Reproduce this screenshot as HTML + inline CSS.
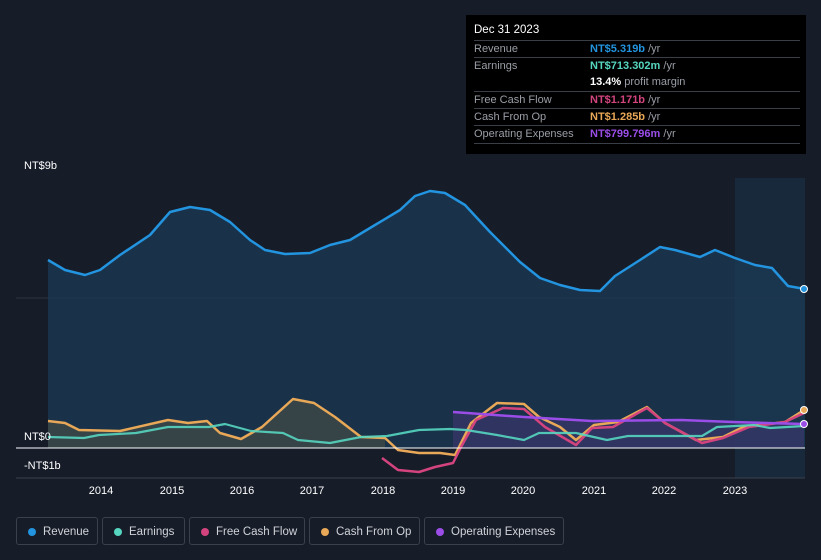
<!DOCTYPE html>
<html><head><style>
body{margin:0;width:821px;height:560px;background:#161c28;font-family:"Liberation Sans",sans-serif;overflow:hidden;position:relative}
.tt{position:absolute;left:466px;top:15px;width:340px;height:139px;background:#000;font-size:11px;color:#9a9ea6}
.tt .h{position:absolute;left:8px;top:9px;color:#fff;font-size:11.5px}
.r{position:absolute;left:8px;right:6px;height:17px;border-top:1px solid #3a3e46;line-height:17px}
.r span{position:absolute;left:116px}
.lab{position:absolute;color:#fff;font-size:11px}
.yr{position:absolute;top:485px;color:#fff;font-size:11px;width:40px;text-align:center;margin-left:-20px}
.lg{position:absolute;top:517px;height:28px;border:1px solid #3a404c;border-radius:3px;color:#d0d3d8;font-size:11.5px;line-height:28px;box-sizing:border-box;padding-left:26px}
.lg i{position:absolute;left:11px;top:10px;width:8px;height:8px;border-radius:50%}
</style></head><body>
<svg width="821" height="560" style="position:absolute;left:0;top:0">
<rect x="735" y="178" width="70" height="300" fill="#1a3247" opacity="0.6"/>
<line x1="16" y1="298" x2="805" y2="298" stroke="#2e3440" stroke-width="1"/>
<line x1="16" y1="478" x2="805" y2="478" stroke="#3a404c" stroke-width="1"/>
<path d="M48,260 L65,270 85,275 100,270 120,255 150,235 170,212 190,207 210,210 230,222 250,240 265,250 285,254 310,253 330,245 350,240 370,228 400,210 415,196 430,191 445,193 465,205 490,232 520,262 540,278 560,285 580,290 600,291 615,276 640,260 660,247 675,250 700,257 715,250 735,258 755,265 772,268 788,286 805,289 L805,448 L48,448Z" fill="#1b3a55" opacity="0.75"/>
<path d="M48,260 L65,270 85,275 100,270 120,255 150,235 170,212 190,207 210,210 230,222 250,240 265,250 285,254 310,253 330,245 350,240 370,228 400,210 415,196 430,191 445,193 465,205 490,232 520,262 540,278 560,285 580,290 600,291 615,276 640,260 660,247 675,250 700,257 715,250 735,258 755,265 772,268 788,286 805,289" fill="none" stroke="#2394df" stroke-width="2.5" stroke-linejoin="round"/>
<path d="M453,412 L524,417 592,421 681,420 733,422 804,424 L804,448 L453,448Z" fill="#5a3a8a" opacity="0.35"/>
<path d="M48,421 L65,423 79,430 120,431 168,420 188,423 207,421 220,433 241,439 262,427 293,399 314,403 335,417 361,437 385,438 L385,448 L48,448Z" fill="#5a5a48" opacity="0.45"/>
<path d="M48,421 L65,423 79,430 120,431 168,420 188,423 207,421 220,433 241,439 262,427 293,399 314,403 335,417 361,437 385,438 398,450 419,453 440,453 455,455 471,423 497,403 524,404 539,417 560,427 576,440 594,425 618,422 647,407 665,423 696,440 723,437 743,427 785,422 804,410" fill="none" stroke="#e8a857" stroke-width="2.5" stroke-linejoin="round"/>
<path d="M382,458 L398,470 419,472 435,467 453,463 461,447 476,420 503,408 524,409 545,427 576,445 592,428 613,427 647,408 665,423 702,443 723,438 749,427 785,422 804,413" fill="none" stroke="#d3447e" stroke-width="2.5" stroke-linejoin="round"/>
<path d="M48,437 L84,438 99,435 136,433 168,427 209,427 225,424 251,431 283,433 298,440 330,443 361,437 387,436 419,430 450,429 466,430 497,435 524,440 539,433 576,433 607,440 628,436 670,436 702,436 717,427 754,425 770,428 804,426" fill="none" stroke="#56d6c0" stroke-width="2.2" stroke-linejoin="round" opacity="0.9"/>
<path d="M453,412 L524,417 592,421 681,420 733,422 804,424" fill="none" stroke="#9b4de8" stroke-width="2.5"/>
<line x1="16" y1="448" x2="805" y2="448" stroke="#fff" stroke-width="1"/>
<circle cx="804" cy="289" r="3.5" fill="#2394df" stroke="#fff"/>
<circle cx="804" cy="410" r="3.5" fill="#e8a857" stroke="#fff"/>
<circle cx="804" cy="424" r="3.5" fill="#9b4de8" stroke="#fff"/>
</svg>
<div class="lab" style="left:24px;top:160px">NT$9b</div>
<div class="lab" style="left:24px;top:431px">NT$0</div>
<div class="lab" style="left:24px;top:460px">-NT$1b</div>
<div class="yr" style="left:101px">2014</div><div class="yr" style="left:172px">2015</div><div class="yr" style="left:242px">2016</div><div class="yr" style="left:312px">2017</div><div class="yr" style="left:383px">2018</div><div class="yr" style="left:453px">2019</div><div class="yr" style="left:523px">2020</div><div class="yr" style="left:594px">2021</div><div class="yr" style="left:664px">2022</div><div class="yr" style="left:735px">2023</div>
<div class="tt">
<div class="h">Dec 31 2023</div>
<div class="r" style="top:25px">Revenue<span><b style="color:#2394df">NT$5.319b</b> /yr</span></div>
<div class="r" style="top:42px">Earnings<span><b style="color:#56d6c0">NT$713.302m</b> /yr</span></div>
<div class="r" style="top:59px;border-top:none"><span><b style="color:#fff">13.4%</b> profit margin</span></div>
<div class="r" style="top:76px">Free Cash Flow<span><b style="color:#d3447e">NT$1.171b</b> /yr</span></div>
<div class="r" style="top:93px">Cash From Op<span><b style="color:#e8a857">NT$1.285b</b> /yr</span></div>
<div class="r" style="top:110px">Operating Expenses<span><b style="color:#9b4de8">NT$799.796m</b> /yr</span></div>
<div class="r" style="top:128px;height:0"></div>
</div>
<div class="lg" style="left:16px;width:82px"><i style="background:#2394df"></i>Revenue</div>
<div class="lg" style="left:102px;width:83px"><i style="background:#56d6c0"></i>Earnings</div>
<div class="lg" style="left:189px;width:116px"><i style="background:#d3447e"></i>Free Cash Flow</div>
<div class="lg" style="left:309px;width:111px"><i style="background:#e8a857"></i>Cash From Op</div>
<div class="lg" style="left:424px;width:140px"><i style="background:#9b4de8"></i>Operating Expenses</div>
</body></html>
